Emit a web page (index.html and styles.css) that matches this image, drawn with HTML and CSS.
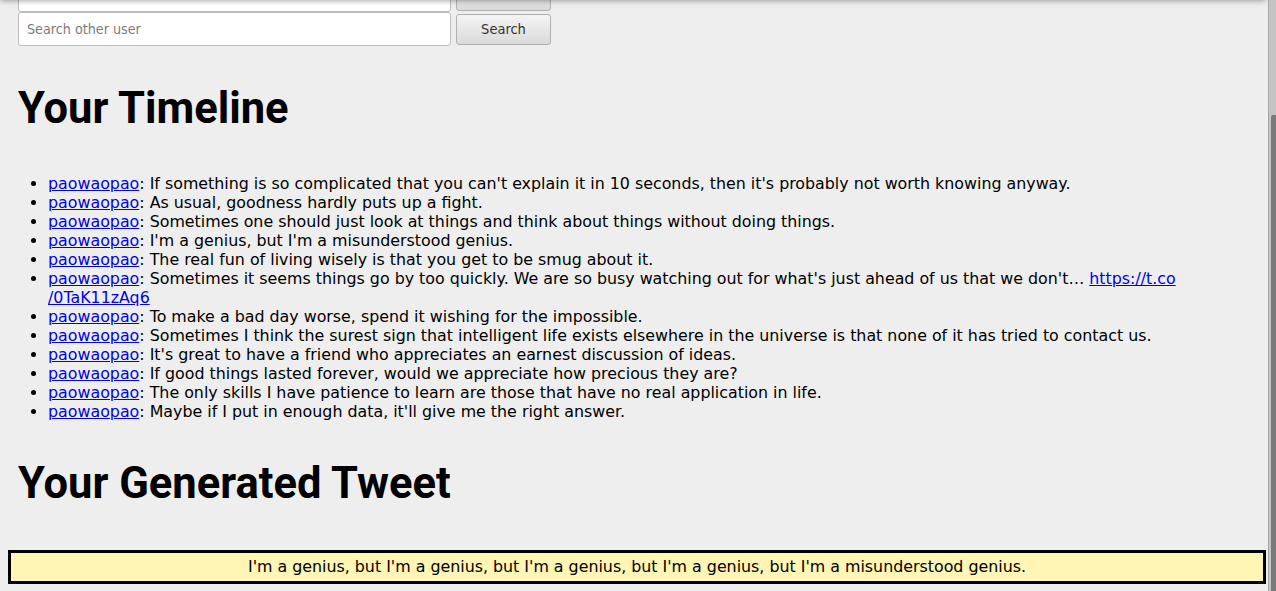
FILE: index.html
```html
<!DOCTYPE html>
<html lang="en">
<head>
<meta charset="utf-8">
<title>Your Timeline</title>
<link rel="stylesheet" href="styles.css">
</head>
<body>
<div class="viewport">
  <div class="topshade"></div>
  <div class="page">
    <div class="container">
      <form class="search-row">
        <input class="field" type="text" placeholder="Your user">
        <button class="btn" type="button">Go</button>
      </form>
      <form class="search-row">
        <input class="field" type="text" placeholder="Search other user">
        <button class="btn" type="button">Search</button>
      </form>
      <h1 class="title">Your Timeline</h1>
    </div>
    <ul class="timeline">
      <li><a href="#">paowaopao</a>: If something is so complicated that you can't explain it in 10 seconds, then it's probably not worth knowing anyway.</li>
      <li><a href="#">paowaopao</a>: As usual, goodness hardly puts up a fight.</li>
      <li><a href="#">paowaopao</a>: Sometimes one should just look at things and think about things without doing things.</li>
      <li><a href="#">paowaopao</a>: I'm a genius, but I'm a misunderstood genius.</li>
      <li><a href="#">paowaopao</a>: The real fun of living wisely is that you get to be smug about it.</li>
      <li><a href="#">paowaopao</a>: Sometimes it seems things go by too quickly. We are so busy watching out for what's just ahead of us that we don't… <a href="#">https://t.co<wbr>/0TaK11zAq6</a></li>
      <li><a href="#">paowaopao</a>: To make a bad day worse, spend it wishing for the impossible.</li>
      <li><a href="#">paowaopao</a>: Sometimes I think the surest sign that intelligent life exists elsewhere in the universe is that none of it has tried to contact us.</li>
      <li><a href="#">paowaopao</a>: It's great to have a friend who appreciates an earnest discussion of ideas.</li>
      <li><a href="#">paowaopao</a>: If good things lasted forever, would we appreciate how precious they are?</li>
      <li><a href="#">paowaopao</a>: The only skills I have patience to learn are those that have no real application in life.</li>
      <li><a href="#">paowaopao</a>: Maybe if I put in enough data, it'll give me the right answer.</li>
    </ul>
    <div class="container">
      <h1 class="title">Your Generated Tweet</h1>
    </div>
    <div class="tweet">I'm a genius, but I'm a genius, but I'm a genius, but I'm a genius, but I'm a misunderstood genius.</div>
  </div>
</div>
<div class="scrollbar"><div class="thumb"></div></div>
</body>
</html>
```

FILE: styles.css
```css
html, body {
  margin: 0;
  height: 100%;
  overflow: hidden;
}
body {
  display: flex;
  background: #eeeeee;
  font-family: "DejaVu Sans", sans-serif;
  font-size: 15.85px;
  line-height: 19px;
  color: #000;
}
.viewport {
  flex: 1;
  overflow: hidden;
  position: relative;
}
.topshade {
  position: absolute;
  top: -10px;
  left: 0;
  right: 2px;
  height: 10px;
  box-shadow: 0 0 6px rgba(0, 0, 0, 0.45);
  z-index: 2;
}
.page {
  margin-top: -22px;
  padding: 0 2px 0 8px;
}
.container {
  padding-left: 10px;
}
.search-row {
  display: flex;
  align-items: center;
  gap: 5px;
  margin: 0;
}
.field {
  box-sizing: border-box;
  width: 433px;
  height: 34px;
  margin: 0;
  padding: 0 8px;
  background: #fff;
  border: 1px solid #bdbdbd;
  border-radius: 3px;
  font-family: "DejaVu Sans Condensed", "DejaVu Sans", sans-serif;
  font-size: 14.2px;
  color: #333;
}
.field::placeholder {
  color: #7c7c7c;
}
.btn {
  box-sizing: border-box;
  width: 95px;
  height: 31px;
  margin: 0;
  padding: 0;
  border: 1px solid #b0b0b0;
  border-radius: 3px;
  background: linear-gradient(#f4f4f4, #dadada);
  font-family: "DejaVu Sans Condensed", "DejaVu Sans", sans-serif;
  font-size: 14.5px;
  color: #333;
}
.title {
  margin: 37px 0 0;
  font-family: Roboto, sans-serif;
  font-weight: 700;
  font-size: 43.5px;
  line-height: 52px;
}
.timeline {
  margin: 39px 0 0;
  padding-left: 40px;
}
.timeline a {
  color: #0000ee;
}
.tweet {
  margin-top: 40px;
  border: 3px solid #000;
  background: #fff5b4;
  text-align: center;
  padding: 4px 0 5px;
}
.scrollbar {
  width: 8px;
  flex: none;
  background: #c4c4c4;
  border-left: 1px solid #a8a8a8;
  box-sizing: border-box;
  padding-top: 115px;
  padding-left: 2px;
}
.thumb {
  height: 100%;
  background: #7a7a7a;
  border-radius: 2px 0 0 0;
}
```
